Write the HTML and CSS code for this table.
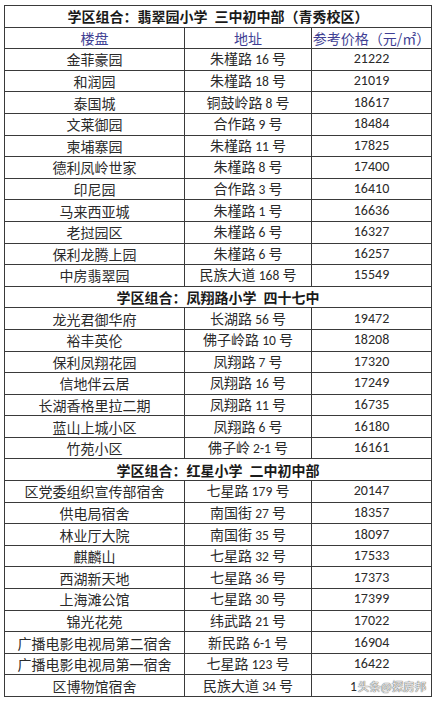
FILE: index.html
```html
<!DOCTYPE html>
<html lang="zh-CN">
<head>
<meta charset="utf-8">
<link rel="stylesheet" href="styles.css">
</head>
<body>
<table class="tbl">
  <colgroup><col class="c1"><col class="c2"><col class="c3"></colgroup>
  <tbody>
    <tr class="sec"><td colspan="3">学区组合：翡翠园小学&ensp;三中初中部（青秀校区）</td></tr>
    <tr class="hdr"><td>楼盘</td><td>地址</td><td>参考价格（元/㎡）</td></tr>
    <tr><td>金菲豪园</td><td>朱槿路 <span class="n">16</span> 号</td><td class="n">21222</td></tr>
    <tr><td>和润园</td><td>朱槿路 <span class="n">18</span> 号</td><td class="n">21019</td></tr>
    <tr><td>泰国城</td><td>铜鼓岭路 <span class="n">8</span> 号</td><td class="n">18617</td></tr>
    <tr><td>文莱御园</td><td>合作路 <span class="n">9</span> 号</td><td class="n">18484</td></tr>
    <tr><td>柬埔寨园</td><td>朱槿路 <span class="n">11</span> 号</td><td class="n">17825</td></tr>
    <tr><td>德利凤岭世家</td><td>朱槿路 <span class="n">8</span> 号</td><td class="n">17400</td></tr>
    <tr><td>印尼园</td><td>合作路 <span class="n">3</span> 号</td><td class="n">16410</td></tr>
    <tr><td>马来西亚城</td><td>朱槿路 <span class="n">1</span> 号</td><td class="n">16636</td></tr>
    <tr><td>老挝园区</td><td>朱槿路 <span class="n">6</span> 号</td><td class="n">16327</td></tr>
    <tr><td>保利龙腾上园</td><td>朱槿路 <span class="n">6</span> 号</td><td class="n">16257</td></tr>
    <tr><td>中房翡翠园</td><td>民族大道 <span class="n">168</span> 号</td><td class="n">15549</td></tr>
    <tr class="sec"><td colspan="3">学区组合：凤翔路小学&ensp;四十七中</td></tr>
    <tr><td>龙光君御华府</td><td>长湖路 <span class="n">56</span> 号</td><td class="n">19472</td></tr>
    <tr><td>裕丰英伦</td><td>佛子岭路 <span class="n">10</span> 号</td><td class="n">18208</td></tr>
    <tr><td>保利凤翔花园</td><td>凤翔路 <span class="n">7</span> 号</td><td class="n">17320</td></tr>
    <tr><td>信地伴云居</td><td>凤翔路 <span class="n">16</span> 号</td><td class="n">17249</td></tr>
    <tr><td>长湖香格里拉二期</td><td>凤翔路 <span class="n">11</span> 号</td><td class="n">16735</td></tr>
    <tr><td>蓝山上城小区</td><td>凤翔路 <span class="n">6</span> 号</td><td class="n">16180</td></tr>
    <tr><td>竹苑小区</td><td>佛子岭 <span class="n">2-1</span> 号</td><td class="n">16161</td></tr>
    <tr class="sec"><td colspan="3">学区组合：红星小学&ensp;二中初中部</td></tr>
    <tr><td>区党委组织宣传部宿舍</td><td>七星路 <span class="n">179</span> 号</td><td class="n">20147</td></tr>
    <tr><td>供电局宿舍</td><td>南国街 <span class="n">27</span> 号</td><td class="n">18357</td></tr>
    <tr><td>林业厅大院</td><td>南国街 <span class="n">35</span> 号</td><td class="n">18097</td></tr>
    <tr><td>麒麟山</td><td>七星路 <span class="n">32</span> 号</td><td class="n">17533</td></tr>
    <tr><td>西湖新天地</td><td>七星路 <span class="n">36</span> 号</td><td class="n">17373</td></tr>
    <tr><td>上海滩公馆</td><td>七星路 <span class="n">30</span> 号</td><td class="n">17399</td></tr>
    <tr><td>锦光花苑</td><td>纬武路 <span class="n">21</span> 号</td><td class="n">17022</td></tr>
    <tr><td>广播电影电视局第二宿舍</td><td>新民路 <span class="n">6-1</span> 号</td><td class="n">16904</td></tr>
    <tr><td>广播电影电视局第一宿舍</td><td>七星路 <span class="n">123</span> 号</td><td class="n">16422</td></tr>
    <tr><td>区博物馆宿舍</td><td>民族大道 <span class="n">34</span> 号</td><td class="last"><span class="n">1</span><span class="wm">头条@探房邦</span></td></tr>
  </tbody>
</table>
</body>
</html>
```

FILE: styles.css
```css
html, body {
  margin: 0;
  padding: 0;
  background: #ffffff;
}
body {
  padding: 5px 6px 0 4px;
  font-family: "Noto Sans CJK SC", "Noto Sans", sans-serif;
  color: #2a2a2a;
}
.tbl {
  border-collapse: collapse;
  table-layout: fixed;
  width: 427px;
}
.c1 { width: 180px; }
.c2 { width: 127px; }
.c3 { width: 120px; }
.tbl td {
  border: 1px solid #3a3a3a;
  height: 20.6px;
  padding: 0;
  text-align: center;
  vertical-align: middle;
  font-size: 14px;
  line-height: 16px;
  white-space: nowrap;
  overflow: hidden;
}
.n {
  font-family: "Carlito", "Liberation Sans", sans-serif;
  font-size: 13.5px;
}
.sec td {
  font-family: "Noto Sans CJK SC", sans-serif;
  font-weight: 700;
  color: #1a1a1a;
}
.hdr td {
  color: #3f3f94;
}
.tbl td.last {
  text-align: left;
  padding-left: 38px;
}
.wm {
  margin-left: 1px;
  font-family: "Noto Sans CJK SC", sans-serif;
  font-size: 11.5px;
  line-height: 16px;
  color: #ededed;
  text-shadow: 0 0 1px #555555, 0 0 1px #555555;
}
```
